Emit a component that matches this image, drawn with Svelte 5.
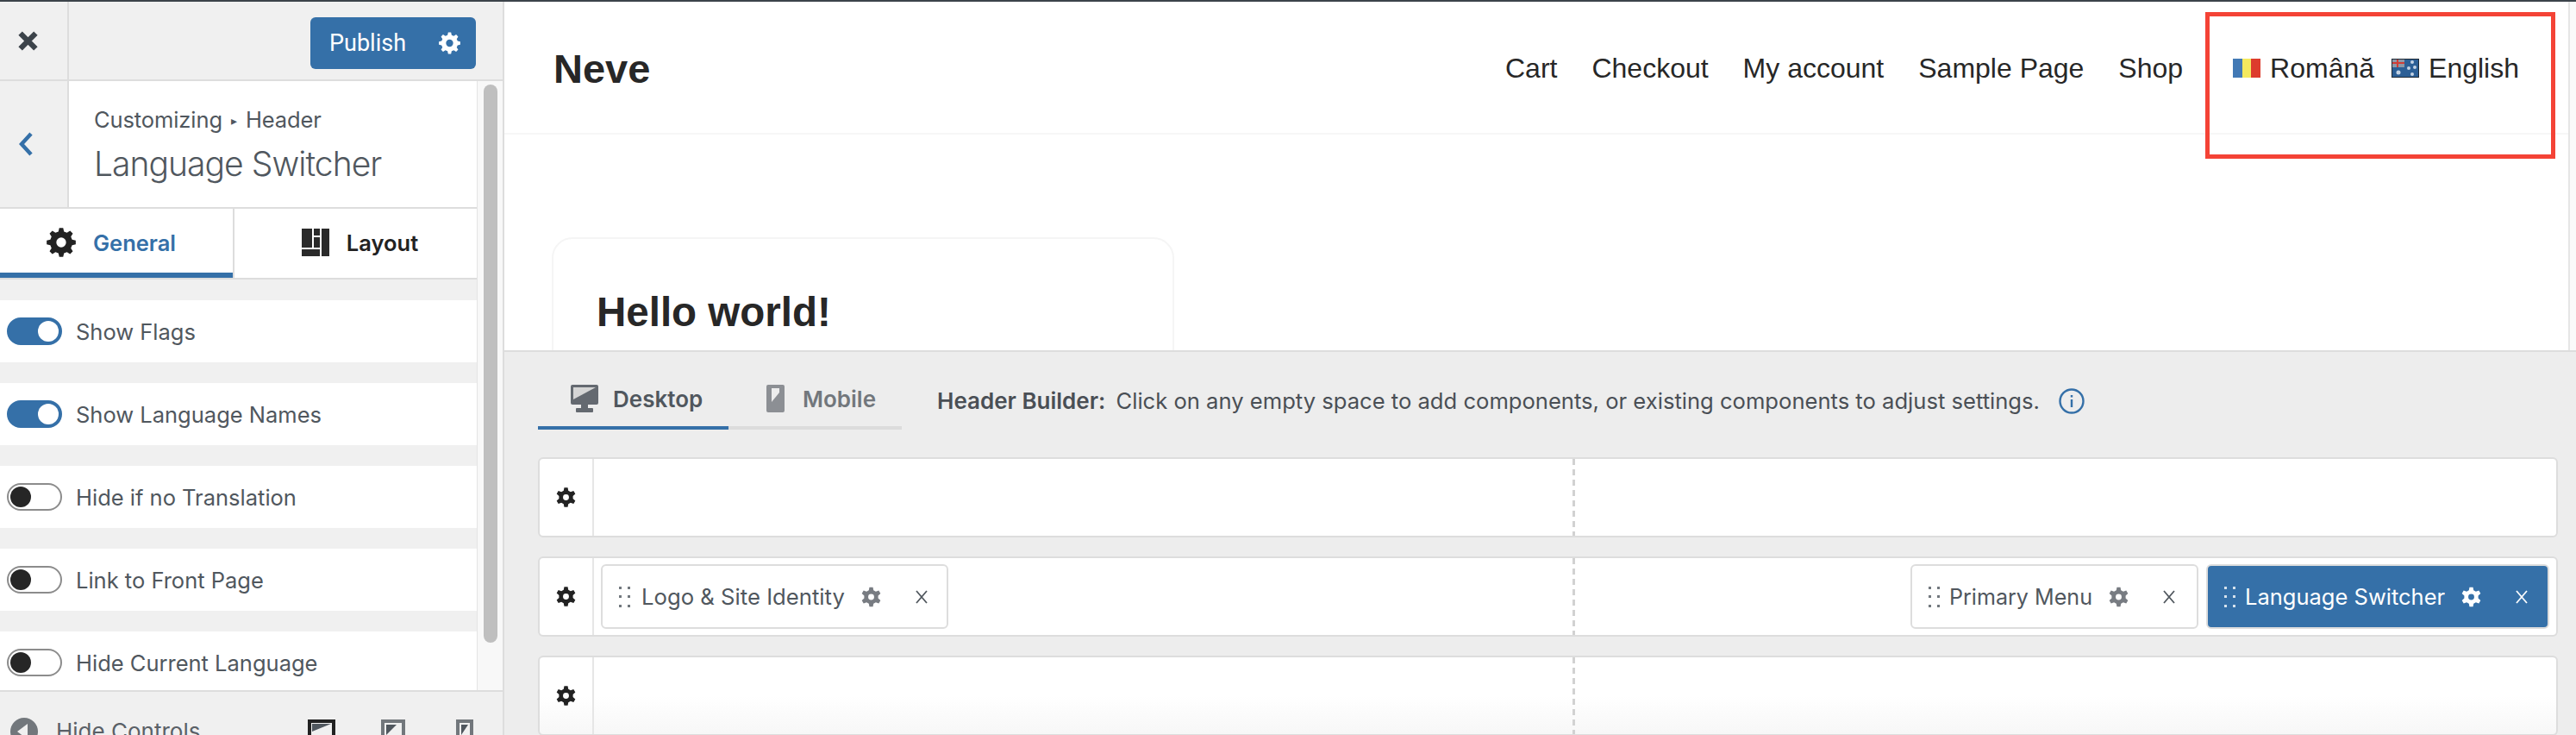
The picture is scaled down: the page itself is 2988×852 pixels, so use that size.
<script>
  const toggles = [
    { label: "Show Flags", on: true },
    { label: "Show Language Names", on: true },
    { label: "Hide if no Translation", on: false },
    { label: "Link to Front Page", on: false },
    { label: "Hide Current Language", on: false }
  ];
  const navItems = ["Cart", "Checkout", "My account", "Sample Page", "Shop"];

  // gear outline around a 24x24 box
  function gear(teeth, outer, inner, hole) {
    const c = 12;
    const step = (Math.PI * 2) / teeth;
    let d = "";
    for (let i = 0; i < teeth; i++) {
      const a = i * step - Math.PI / 2;
      const pts = [
        [inner, a - step * 0.32],
        [outer, a - step * 0.17],
        [outer, a + step * 0.17],
        [inner, a + step * 0.32]
      ];
      for (const [r, t] of pts) {
        d += (d ? "L" : "M") + (c + r * Math.cos(t)).toFixed(2) + " " + (c + r * Math.sin(t)).toFixed(2);
      }
    }
    d += `ZM${c - hole} ${c}a${hole} ${hole} 0 1 0 ${hole * 2} 0a${hole} ${hole} 0 1 0 ${-hole * 2} 0Z`;
    return d;
  }
  const gear6 = gear(6, 12, 8.6, 3.6);
  const gear8 = gear(8, 12, 9.2, 4);
</script>

{#snippet cog(cls)}
  <svg class={cls} viewBox="0 0 24 24"><path fill-rule="evenodd" d={gear6} /></svg>
{/snippet}

{#snippet grip()}
  <svg class="grip" viewBox="0 0 16 24"><g>
    <rect x="1" y="0" width="3" height="3" /><rect x="11" y="0" width="3" height="3" />
    <rect x="1" y="10" width="3" height="3" /><rect x="11" y="10" width="3" height="3" />
    <rect x="1" y="21" width="3" height="3" /><rect x="11" y="21" width="3" height="3" />
  </g></svg>
{/snippet}

{#snippet cross()}
  <svg class="cross" viewBox="0 0 16 16"><path d="M2 1L14 15M14 1L2 15" /></svg>
{/snippet}

<div class="screen">
  <aside class="sidebar">
    <div class="topbar">
      <div class="close">
        <svg viewBox="0 0 22 22"><path d="M2.5 2.5L19.5 19.5M19.5 2.5L2.5 19.5" /></svg>
      </div>
      <div class="publish-wrap">
        <button class="publish">
          <span>Publish</span>
          <svg viewBox="0 0 24 24"><path fill-rule="evenodd" d={gear8} /></svg>
        </button>
      </div>
    </div>

    <div class="panel">
      <div class="panel-main">
        <div class="section-head">
          <div class="back">
            <svg viewBox="0 0 16 28"><path d="M14 2L3 14L14 26" /></svg>
          </div>
          <div class="section-title">
            <span class="crumb">Customizing <i>▸</i> Header</span>
            <span class="title">Language Switcher</span>
          </div>
        </div>

        <div class="tabs">
          <div class="tab active">
            <svg viewBox="0 0 24 24"><path fill-rule="evenodd" d={gear8} /></svg>
            <span>General</span>
          </div>
          <div class="tab">
            <svg viewBox="0 0 32 32" class="layout-ico">
              <rect x="0" y="0" width="12" height="22" /><rect x="14" y="0" width="7" height="8" />
              <rect x="23" y="0" width="9" height="24" /><rect x="14" y="10" width="7" height="12" />
              <rect x="0" y="24" width="21" height="8" /><rect x="23" y="24" width="9" height="8" />
            </svg>
            <span>Layout</span>
          </div>
        </div>

        <div class="controls">
          {#each toggles as t}
            <div class="control">
              <span class="toggle" class:on={t.on}><span class="knob"></span></span>
              <span class="control-label">{t.label}</span>
            </div>
          {/each}
        </div>
      </div>
      <div class="scroll-track"><div class="scroll-thumb"></div></div>
    </div>

    <div class="footer">
      <svg class="hide-ico" viewBox="0 0 32 32">
        <circle cx="16" cy="16" r="16" /><path d="M20 7L8 16L20 25Z" fill="#f0f0f0" />
      </svg>
      <span class="hide-label">Hide Controls</span>
      <div class="devices">
        <svg class="dev dev-d" viewBox="0 0 32 24"><rect x="2" y="2" width="28" height="24" /><path d="M5 5H27L5 14Z" /></svg>
        <svg class="dev dev-t" viewBox="0 0 28 24"><rect x="2" y="2" width="24" height="24" /><path d="M6 6H18L6 18Z" /></svg>
        <svg class="dev dev-m" viewBox="0 0 20 24"><rect x="2" y="2" width="16" height="24" /><path d="M6 6H14L6 18Z" /></svg>
      </div>
    </div>
  </aside>

  <main class="main">
    <section class="preview">
      <div class="site">
        <header class="site-header">
          <span class="logo">Neve</span>
          <nav class="nav">
            {#each navItems as item}
              <span>{item}</span>
            {/each}
            <span class="lang first">
              <svg class="flag" viewBox="0 0 32 22">
                <rect width="11" height="22" fill="#4279b5" /><rect x="11" width="11" height="22" fill="#f4e95e" /><rect x="21" width="11" height="22" fill="#dd3c2d" />
              </svg>
              Română
            </span>
            <span class="lang">
              <svg class="flag" viewBox="0 0 32 22">
                <rect width="32" height="22" fill="#2c5f96" />
                <rect x="0" y="0" width="15" height="10" fill="#8d98a8" />
                <path d="M0 5H15M7 0V10" stroke="#cf3d36" stroke-width="2" />
                <circle cx="8" cy="16" r="2.5" fill="#c4d3e4" /><circle cx="24" cy="4" r="2" fill="#c4d3e4" />
                <circle cx="27" cy="10" r="2" fill="#c4d3e4" /><circle cx="20" cy="11" r="2" fill="#c4d3e4" /><circle cx="24" cy="18" r="2" fill="#c4d3e4" />
                <rect width="32" height="22" fill="none" stroke="#1f2a36" stroke-width="2" />
              </svg>
              English
            </span>
          </nav>
        </header>
        <article class="card">
          <h1>Hello world!</h1>
        </article>
      </div>
      <div class="highlight"></div>
      <div class="preview-scroll"></div>
    </section>

    <section class="builder">
      <div class="builder-top">
        <div class="device-tabs">
          <div class="device-tab active">
            <svg viewBox="0 0 32 32" class="d-ico">
              <rect x="0" y="0" width="32" height="23" rx="2" /><rect x="12" y="23" width="8" height="5" /><rect x="6" y="27" width="20" height="5" rx="1" />
              <path d="M3 3H29L3 17Z" fill="#d5d5d5" />
            </svg>
            <span>Desktop</span>
          </div>
          <div class="device-tab">
            <svg viewBox="0 0 21 32" class="m-ico">
              <rect x="0" y="0" width="21" height="32" rx="2" /><path d="M6 4H15V9L6 20Z" fill="#ededed" />
            </svg>
            <span>Mobile</span>
          </div>
        </div>
        <p class="hint"><b>Header Builder:</b> Click on any empty space to add components, or existing components to adjust settings.</p>
        <svg class="info" viewBox="0 0 30 30">
          <circle cx="15" cy="15" r="13.5" /><path d="M15 13V22M15 8V10.5" />
        </svg>
      </div>

      <div class="rows">
        <div class="row">
          <div class="row-cog">{@render cog("dark-cog")}</div>
          <div class="row-body"></div>
        </div>
        <div class="row">
          <div class="row-cog">{@render cog("dark-cog")}</div>
          <div class="row-body">
            <div class="slot">
              <div class="chip logo-chip">
                {@render grip()}
                <span class="chip-label">Logo &amp; Site Identity</span>
                {@render cog("chip-cog")}
                {@render cross()}
              </div>
            </div>
            <div class="slot end">
              <div class="chip menu-chip">
                {@render grip()}
                <span class="chip-label">Primary Menu</span>
                {@render cog("chip-cog")}
                {@render cross()}
              </div>
              <div class="chip selected">
                {@render grip()}
                <span class="chip-label">Language Switcher</span>
                {@render cog("chip-cog")}
                {@render cross()}
              </div>
            </div>
          </div>
        </div>
        <div class="row fade">
          <div class="row-cog">{@render cog("dark-cog")}</div>
          <div class="row-body"></div>
        </div>
      </div>
    </section>
  </main>
</div>

<style>
  :global(body) {
    margin: 0;
    background: #fff;
  }
  .screen {
    display: flex;
    width: 2988px;
    height: 852px;
    overflow: hidden;
    border-top: 2px solid #3c434a;
    box-sizing: border-box;
    font-family: Inter, "Noto Sans", sans-serif;
    color: #50575e;
  }

  /* sidebar */
  .sidebar {
    width: 585px;
    flex: none;
    display: flex;
    flex-direction: column;
    background: #f0f0f0;
    border-right: 2px solid #ddd;
    box-sizing: border-box;
  }
  .topbar {
    display: flex;
    height: 92px;
    flex: none;
    border-bottom: 2px solid #ddd;
    box-sizing: border-box;
  }
  .close {
    width: 80px;
    border-right: 2px solid #ddd;
    box-sizing: border-box;
    display: flex;
    align-items: center;
    justify-content: center;
  }
  .close svg {
    width: 23px;
    height: 23px;
    margin-left: -14px;
    fill: none;
    stroke: #3c434a;
    stroke-width: 6;
  }
  .publish-wrap {
    flex: 1;
    display: flex;
    justify-content: flex-end;
    padding: 18px 31px 0 0;
  }
  .publish {
    width: 192px;
    height: 60px;
    border: 0;
    border-radius: 6px;
    background: #3570a8;
    color: #fff;
    display: flex;
    align-items: center;
    justify-content: space-between;
    padding: 0 18px 0 22px;
    font: 400 27px Roboto, Inter, sans-serif;
  }
  .publish svg {
    width: 25px;
    height: 26px;
    fill: #fff;
  }

  .panel {
    flex: 1;
    min-height: 0;
    display: flex;
    border-bottom: 2px solid #ddd;
  }
  .panel-main {
    width: 553px;
    flex: none;
    overflow: hidden;
    border-right: 1px solid #e4e4e4;
  }
  .section-head {
    display: flex;
    height: 148px;
    background: #fff;
    border-bottom: 2px solid #ddd;
    box-sizing: border-box;
  }
  .back {
    width: 80px;
    flex: none;
    background: #f0f0f0;
    border-right: 2px solid #ddd;
    box-sizing: border-box;
    display: flex;
    align-items: center;
    padding-left: 22px;
  }
  .back svg {
    width: 16px;
    height: 28px;
    fill: none;
    stroke: #3570a8;
    stroke-width: 4.5;
  }
  .section-title {
    padding: 30px 0 0 29px;
    display: flex;
    flex-direction: column;
  }
  .crumb {
    font-size: 25.5px;
    line-height: 30px;
    letter-spacing: -0.1px;
  }
  .crumb i {
    font-style: normal;
    font-size: 14px;
    vertical-align: 3px;
    margin: 0 3px;
  }
  .title {
    font-size: 39px;
    font-weight: 300;
    line-height: 50px;
    margin-top: 10px;
    letter-spacing: -0.95px;
  }

  .tabs {
    display: flex;
    height: 82px;
    background: #fff;
    border-bottom: 2px solid #ddd;
    box-sizing: border-box;
  }
  .tab {
    flex: 1;
    display: flex;
    align-items: center;
    justify-content: center;
    gap: 20px;
    font-size: 25.5px;
    font-weight: 600;
    color: #222;
    padding: 0 0 2px 10px;
    box-sizing: border-box;
  }
  .tab svg {
    width: 34px;
    height: 34px;
    fill: #222;
  }
  .tab.active {
    flex: none;
    width: 272px;
    padding: 0 12px 2px 0;
    color: #3570a8;
    border-right: 2px solid #ddd;
    box-shadow: inset 0 -6px 0 #3570a8;
  }
  .tab .layout-ico {
    width: 32px;
    height: 32px;
    fill: #2a2a2a;
  }

  .controls {
    padding-top: 24px;
    display: flex;
    flex-direction: column;
    gap: 24px;
  }
  .control {
    height: 72px;
    flex: none;
    background: #fff;
    display: flex;
    align-items: center;
    padding-left: 8px;
    gap: 16px;
    font-size: 25.5px;
  }
  .toggle {
    width: 64px;
    height: 32px;
    box-sizing: border-box;
    border-radius: 16px;
    border: 2px solid #8c8c8c;
    display: flex;
    align-items: center;
    padding-left: 2px;
    background: #fff;
  }
  .knob {
    width: 24px;
    height: 24px;
    border-radius: 50%;
    background: #262626;
  }
  .toggle.on {
    background: #3570a8;
    border-color: #3570a8;
    justify-content: flex-end;
    padding: 0 2px 0 0;
  }
  .toggle.on .knob {
    background: #fff;
  }

  .scroll-track {
    flex: 1;
    padding: 4px 0 0 7px;
    background: #f8f8f8;
  }
  .scroll-thumb {
    width: 16px;
    height: 647px;
    border-radius: 8px;
    background: #bfbfbf;
  }

  .footer {
    height: 50px;
    flex: none;
    display: flex;
    gap: 21px;
    padding: 30px 0 0 12px;
    box-sizing: border-box;
    overflow: hidden;
    font-size: 26px;
  }
  .hide-ico {
    width: 32px;
    height: 32px;
    flex: none;
    fill: #72777c;
  }
  .hide-label {
    line-height: 32px;
    color: #5a6067;
  }
  .devices {
    margin-left: 104px;
    display: flex;
    gap: 0;
  }
  .dev {
    flex: none;
    height: 28px;
    fill: #50575e;
  }
  .dev rect {
    fill: #f0f0f0;
    stroke: #72777c;
    stroke-width: 4;
  }
  .dev-d {
    width: 32px;
  }
  .dev-d rect {
    stroke: #222;
  }
  .dev-t {
    width: 28px;
    margin-left: 53px;
  }
  .dev-m {
    width: 20px;
    margin-left: 59px;
  }

  /* preview */
  .main {
    flex: 1;
    min-width: 0;
    display: flex;
    flex-direction: column;
  }
  .preview {
    height: 404px;
    flex: none;
    position: relative;
    display: flex;
    overflow: hidden;
    background: #fff;
  }
  .site {
    flex: 1;
    min-width: 0;
    font-family: "Liberation Sans", Arial, sans-serif;
    color: #272727;
  }
  .site-header {
    height: 154px;
    box-sizing: border-box;
    border-bottom: 2px solid #f7f7f7;
    display: flex;
    align-items: center;
    justify-content: space-between;
    padding: 2px 57px 0 57px;
  }
  .logo {
    font-size: 47px;
    font-weight: 700;
  }
  .nav {
    display: flex;
    align-items: center;
    gap: 40px;
    font-size: 32px;
  }
  .lang {
    display: flex;
    align-items: center;
    gap: 11px;
    margin-left: -20px;
  }
  .lang.first {
    margin-left: 18px;
  }
  .flag {
    width: 32px;
    height: 22px;
    flex: none;
  }
  .card {
    width: 722px;
    height: 300px;
    box-sizing: border-box;
    margin: 119px 0 0 55px;
    border: 2px solid #f5f5f5;
    border-radius: 24px;
    padding: 55px 0 0 50px;
  }
  .card h1 {
    margin: 0;
    font-size: 47.5px;
    line-height: 60px;
    font-weight: 700;
  }
  .highlight {
    position: absolute;
    left: 1973px;
    top: 12px;
    width: 406px;
    height: 170px;
    box-sizing: border-box;
    border: 5px solid #f44336;
  }
  .preview-scroll {
    width: 9px;
    flex: none;
    border-left: 2px solid #e6e6e6;
    box-sizing: border-box;
    background: #fafafa;
  }

  /* builder */
  .builder {
    flex: 1;
    min-height: 0;
    background: #ededed;
    border-top: 2px solid #ddd;
    padding: 0 21px 0 39px;
    overflow: hidden;
  }
  .builder-top {
    display: flex;
    align-items: flex-start;
    height: 122px;
  }
  .device-tabs {
    display: flex;
    width: 422px;
    flex: none;
    height: 90px;
    box-shadow: inset 0 -4px 0 #dcdcdc;
  }
  .device-tab {
    display: flex;
    align-items: flex-start;
    gap: 17px;
    padding: 38px 0 0 38px;
    box-sizing: border-box;
    font-size: 26px;
    font-weight: 600;
    color: #72777c;
  }
  .device-tab span {
    line-height: 34px;
  }
  .device-tab.active {
    width: 221px;
    color: #50575e;
    box-shadow: inset 0 -4px 0 #3570a8;
  }
  .device-tab:not(.active) {
    padding-left: 44px;
    gap: 21px;
  }
  .d-ico {
    width: 32px;
    height: 32px;
    flex: none;
    fill: #646970;
  }
  .m-ico {
    width: 21px;
    height: 32px;
    flex: none;
    fill: #8c8f94;
  }
  .hint {
    margin: 40px 0 0 41px;
    font-size: 25.6px;
    line-height: 34px;
    color: #4a4f55;
    white-space: nowrap;
  }
  .hint b {
    font-size: 26px;
    font-weight: 600;
    margin-right: 5px;
  }
  .info {
    width: 30px;
    height: 30px;
    flex: none;
    margin: 42px 0 0 22px;
    fill: none;
    stroke: #3570a8;
    stroke-width: 2.4;
  }

  .rows {
    display: flex;
    flex-direction: column;
    gap: 22px;
  }
  .row {
    height: 93px;
    flex: none;
    display: flex;
    box-sizing: border-box;
    border: 2px solid #ddd;
    border-radius: 6px;
    background: #fff;
  }
  .row-cog {
    width: 63px;
    flex: none;
    box-sizing: border-box;
    border-right: 2px solid #e6e6e6;
    display: flex;
    align-items: center;
    justify-content: center;
  }
  :global(.dark-cog) {
    width: 23px;
    height: 25px;
    fill: #222;
  }
  .row-body {
    flex: 1;
    min-width: 0;
    display: grid;
    grid-template-columns: 1fr 1fr;
    align-items: center;
    background: repeating-linear-gradient(#d2d2d2 0 7px, transparent 7px 12px) calc(50% - 2px) 0 / 3px 100% no-repeat;
    padding: 0 8px;
  }
  .fade {
    background: linear-gradient(#fff 45px, #f7f7f7);
  }
  .slot {
    display: flex;
    gap: 9px;
  }
  .slot.end {
    justify-content: flex-end;
  }
  .chip {
    height: 75px;
    box-sizing: border-box;
    display: flex;
    align-items: center;
    border: 2px solid #ddd;
    border-radius: 6px;
    background: #fff;
    padding: 0 18px 0 18px;
    font-size: 25.5px;
    color: #50575e;
    fill: #787c82;
  }
  .chip-label {
    margin-left: 9px;
    white-space: nowrap;
  }
  :global(.grip) {
    width: 16px;
    height: 24px;
    flex: none;
    fill: currentColor;
    opacity: 0.8;
  }
  :global(.chip-cog) {
    width: 23px;
    height: 24px;
    flex: none;
    margin-left: 19px;
  }
  :global(.cross) {
    width: 16px;
    height: 18px;
    flex: none;
    margin-left: 39px;
    fill: none;
    stroke: currentColor;
    stroke-width: 1.8;
  }
  .logo-chip {
    width: 403px;
    font-size: 25.7px;
  }
  .logo-chip .chip-label {
    margin-left: 11px;
  }
  .menu-chip {
    width: 334px;
    font-size: 25.1px;
  }
  .chip.selected {
    width: 398px;
    background: #3570a8;
    color: #fff;
    fill: #fff;
  }
</style>
